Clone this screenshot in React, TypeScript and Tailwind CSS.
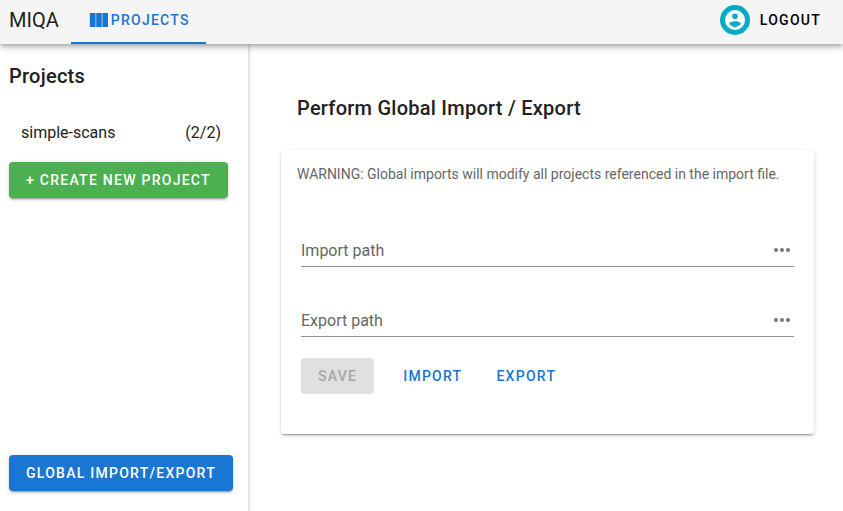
import React from 'react';

const BUTTON = 'h-9 rounded px-[17px] text-sm font-medium uppercase tracking-[0.09em]';
const RAISED =
  'shadow-[0_3px_1px_-2px_rgba(0,0,0,0.2),0_2px_2px_0_rgba(0,0,0,0.14),0_1px_5px_0_rgba(0,0,0,0.12)]';

function PathField({ id, label }: { id: string; label: string }) {
  return (
    <div className="flex h-8 items-center border-b border-[#949494] text-base">
      <input
        id={id}
        type="text"
        aria-label={label}
        placeholder={label}
        className="min-w-0 flex-1 bg-transparent outline-none placeholder:text-[#666666]"
      />
      <button type="button" aria-label={`Browse ${label}`} className="pb-0.5 text-[#757575]">
        <svg viewBox="0 0 24 24" className="size-6" fill="currentColor" aria-hidden="true">
          <path d="M16,12A2,2 0 0,1 18,10A2,2 0 0,1 20,12A2,2 0 0,1 18,14A2,2 0 0,1 16,12M10,12A2,2 0 0,1 12,10A2,2 0 0,1 14,12A2,2 0 0,1 12,14A2,2 0 0,1 10,12M4,12A2,2 0 0,1 6,10A2,2 0 0,1 8,12A2,2 0 0,1 6,14A2,2 0 0,1 4,12Z" />
        </svg>
      </button>
    </div>
  );
}

function Header() {
  return (
    <header className="z-10 flex h-11 shrink-0 items-stretch bg-[#f5f5f5] pl-2 pr-3.5 shadow-[0_2px_4px_-1px_rgba(0,0,0,0.2),0_4px_5px_0_rgba(0,0,0,0.14),0_1px_10px_0_rgba(0,0,0,0.12)]">
      <div className="flex items-center pb-1 pl-px pr-3 text-xl">MIQA</div>
      <nav className="flex">
        <a
          href="#projects"
          className="flex items-center border-b-2 border-[#1976d2] px-4 pb-0.5 text-sm font-medium uppercase tracking-[0.09em] text-[#1976d2]"
        >
          <svg viewBox="0 0 24 24" className="size-6" fill="currentColor" aria-hidden="true">
            <path d="M14.8 5V19H9.2V5H14.8M15.4 19H21V5H15.4V19M8.6 19V5H2.8V19H8.6Z" />
          </svg>
          Projects
        </a>
      </nav>
      <div className="ml-auto flex items-center pb-1">
        <span className="flex size-[30px] items-center justify-center rounded-full bg-[#00acc1] text-white">
          <svg viewBox="0 0 24 24" className="size-6" fill="currentColor" aria-hidden="true">
            <path d="M12,19C9.5,19 8.1,17.6 6.2,16C6.5,14 9.6,13.2 12,13.2C14.4,13.2 17.5,14 17.8,16C15.9,17.6 14.5,19 12,19M12,5.4A2.8,2.8 0 0,1 14.8,8.2A2.8,2.8 0 0,1 12,11A2.8,2.8 0 0,1 9.2,8.2A2.8,2.8 0 0,1 12,5.4M12,2A10,10 0 0,0 2,12A10,10 0 0,0 12,22A10,10 0 0,0 22,12C22,6.47 17.5,2 12,2Z" />
          </svg>
        </span>
        <button type="button" className="pl-2.5 pr-2 text-sm font-medium uppercase tracking-[0.09em] text-black">
          Logout
        </button>
      </div>
    </header>
  );
}

export default function App() {
  return (
    <div className="flex min-h-screen flex-col bg-white font-[Roboto,sans-serif] text-[#212121]">
      <Header />
      <div className="flex flex-1">
        <aside className="flex w-[249px] shrink-0 flex-col items-start border-r border-[#e0e0e0] px-2 pb-5 pl-[9px] pt-4 shadow-[1px_0_3px_rgba(0,0,0,0.12)]">
          <h1 className="text-xl leading-8 font-medium tracking-[0.0125em]">Projects</h1>
          <a href="#simple-scans" className="mt-4 flex h-[50px] w-full items-center justify-between pl-3 pr-[19px] text-base">
            <span>simple-scans</span>
            <span>(2/2)</span>
          </a>
          <button type="button" className={`${BUTTON} ${RAISED} mt-1 bg-[#4caf50] text-white`}>
            + Create new Project
          </button>
          <button type="button" className={`${BUTTON} ${RAISED} mt-auto bg-[#1976d2] text-white`}>
            Global import/export
          </button>
        </aside>
        <main className="min-w-0 flex-1 pl-8 pr-[29px] pt-12">
          <h2 className="px-4 text-xl leading-8 font-medium tracking-[0.0125em]">
            Perform Global Import / Export
          </h2>
          <form className={`${RAISED} mt-[26px] rounded px-4 pb-10 pt-3`}>
            <p className="text-sm leading-6 text-[#666666]">
              WARNING: Global imports will modify all projects referenced in the import file.
            </p>
            <div className="mt-[49px] flex flex-col gap-[38px] px-1">
              <PathField id="import-path" label="Import path" />
              <PathField id="export-path" label="Export path" />
            </div>
            <div className="mt-[21px] flex px-1">
              <button type="button" disabled className={`${BUTTON} mr-3 bg-[#e0e0e0] text-[#a6a6a6]`}>
                Save
              </button>
              <button type="button" className={`${BUTTON} text-[#1976d2]`}>
                Import
              </button>
              <button type="button" className={`${BUTTON} text-[#1976d2]`}>
                Export
              </button>
            </div>
          </form>
        </main>
      </div>
    </div>
  );
}
